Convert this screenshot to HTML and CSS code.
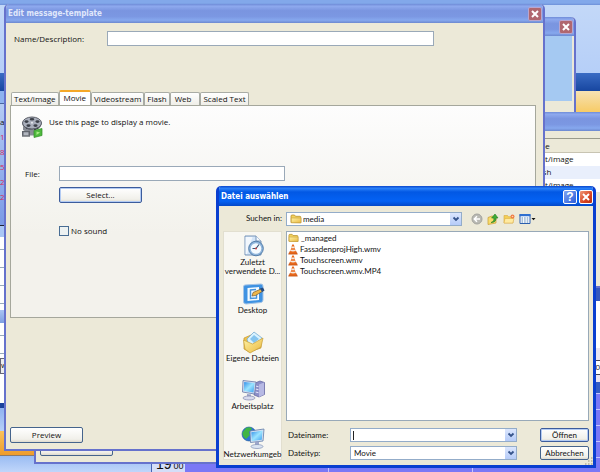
FILE: index.html
```html
<!DOCTYPE html>
<html lang="de">
<head>
<meta charset="utf-8">
<title>Edit message-template</title>
<link rel="stylesheet" href="styles.css">
</head>
<body>
<svg class="defs" aria-hidden="true">
  <defs>
    <linearGradient id="gold" x1="0" y1="0" x2="1" y2="1"><stop offset="0" stop-color="#fff3a6"/><stop offset="1" stop-color="#e9b840"/></linearGradient>
    <linearGradient id="screen" x1="0" y1="0" x2="1" y2="1"><stop offset="0" stop-color="#2f8de8"/><stop offset=".5" stop-color="#9be4ff"/><stop offset="1" stop-color="#3a9df0"/></linearGradient>
    <symbol id="folder" viewBox="0 0 12 10"><path d="M1 8.500V2Q1 1 2 1h2.500l1 1.300h4.500q.8 0 .8 1v5.400z" fill="#f3d25e" stroke="#b8912f" stroke-width=".8"/><path d="M1.300 8.800V4h9.700v4.800z" fill="url(#gold)" stroke="#c39c38" stroke-width=".6"/></symbol>
    <symbol id="cone" viewBox="0 0 10 11"><path d="M1.800 7.500h6.400l1.300 2.700h-9z" fill="#e0621a" stroke="#b94a10" stroke-width=".4"/><path d="M4.200.5h1.600L8 8.200q-3 1.500-6 0z" fill="#ea6a1c"/><path d="M3.600 2.500h2.800l.5 1.700H3.100zM2.700 5.700h4.600l.4 1.400q-2.700.9-5.400 0z" fill="#f4e8df"/></symbol>
    <symbol id="chevron" viewBox="0 0 8 6"><path d="m1.500 1.500 2.500 2.500 2.500-2.500" fill="none" stroke="#35538a" stroke-width="1.800"/></symbol>
  </defs>
</svg>
<div class="desktop">
  <div class="backdrop" aria-hidden="true">
    <div class="band cap"></div>
    <div class="band sky"></div>
    <div class="band navy"></div>
    <div class="split">
      <div class="strip">
        <div class="s-blue"></div>
        <div class="s-days"><span>a</span><span class="red">1</span><span class="red">8</span><span class="red">5</span><span class="red">22</span><span class="red">29</span></div>
        <div class="s-head"></div>
        <div class="s-rows"></div>
        <div class="s-band"></div>
        <div class="s-rows short"></div>
        <div class="s-box">w</div>
        <div class="s-white"></div>
        <div class="s-navy"></div>
        <div class="s-pale"></div>
        <div class="s-orange"></div>
        <div class="s-foot"></div>
      </div>
      <div class="hour">19 <sup>00</sup></div>
      <div class="strip calendar">
        <div class="c-amber"></div>
        <div class="c-lilac"></div>
        <div class="c-navy"></div>
        <div class="c-white"></div>
        <div class="c-pink"></div>
        <div class="c-box">0</div>
        <div class="c-pink thin"></div>
        <div class="c-blue"></div>
        <div class="c-grid"><i></i><i></i></div>
      </div>
    </div>
  </div>

  <section class="window win-behind">
    <header class="titlebar"><span></span><button class="close dim" type="button" aria-label="Close"><svg viewBox="0 0 12 12"><path d="m3 3 6 6M9 3 3 9"/></svg></button></header>
    <div class="behind-body">
      <div class="blue-area"></div>
      <button class="btn preview" type="button">Preview</button>
    </div>
  </section>

  <section class="window win-list">
    <header class="titlebar"></header>
    <table class="types">
      <thead><tr><th>Type</th></tr></thead>
      <tbody><tr><td>Text/image</td></tr><tr><td>Flash</td></tr><tr><td>Text/image</td></tr></tbody>
    </table>
  </section>

  <section class="window win-main">
    <header class="titlebar"><span>Edit message-template</span><button class="close dim" type="button" aria-label="Close"><svg viewBox="0 0 12 12"><path d="m3 3 6 6M9 3 3 9"/></svg></button></header>
    <form class="main-body">
      <div class="name-row"><label for="name">Name/Description:</label><input id="name" class="field" type="text"></div>
      <div class="tabs" role="tablist">
        <button type="button" role="tab">Text/image</button>
        <button type="button" role="tab" aria-selected="true">Movie</button>
        <button type="button" role="tab">Videostream</button>
        <button type="button" role="tab">Flash</button>
        <button type="button" role="tab" class="roomy">Web</button>
        <button type="button" role="tab">Scaled Text</button>
      </div>
      <div class="panel" role="tabpanel">
        <div class="intro">
          <svg class="reel" viewBox="0 0 22 22">
            <ellipse cx="11" cy="8" rx="9.500" ry="6.500" fill="#343840"/>
            <ellipse cx="11" cy="7" rx="9.500" ry="6" fill="#a9aebb" stroke="#5b5f69"/>
            <g fill="#3c4049"><ellipse cx="11" cy="3.300" rx="2.300" ry="1.200"/><ellipse cx="5.500" cy="5.600" rx="2" ry="1.300"/><ellipse cx="16.500" cy="5.600" rx="2" ry="1.300"/><ellipse cx="7.500" cy="9.600" rx="2.100" ry="1.300"/><ellipse cx="14.500" cy="9.600" rx="2.100" ry="1.300"/></g>
            <circle cx="11" cy="6.700" r="1" fill="#e8eaf0"/>
            <path d="M2 10v4q5 4 11 2v-3Q6 15 2 10z" fill="#868a93"/>
            <path d="M1 15h8v6H1z" fill="#60646c"/><path d="M2.500 16.300h5v3h-5z" fill="#b2b6bf"/><path d="M1.500 20.300h7" stroke="#ddd" stroke-dasharray="1 1"/>
            <path d="M9 14.500h4v5H9z" fill="#8a8e97"/>
            <path d="m13 14.500 8-2v7l-8 2z" fill="#4fb93d" stroke="#2f8c27" stroke-width=".7"/><path d="m15.500 15.500 3.500 1-3.500 2.500z" fill="#a9eb86"/>
          </svg>
          <p>Use this page to display a movie.</p>
        </div>
        <div class="file-grid">
          <label for="file">File:</label><input id="file" class="field" type="text">
          <button class="btn focus" type="button">Select...</button>
          <label class="check"><input type="checkbox">No sound</label>
        </div>
      </div>
      <button class="btn preview" type="button">Preview</button>
    </form>
  </section>

  <section class="dialog" role="dialog" aria-labelledby="dlg-title">
    <header class="dlg-title"><span id="dlg-title">Datei auswählen</span>
      <button class="close help" type="button" aria-label="Hilfe">?</button>
      <button class="close" type="button" aria-label="Schließen"><svg viewBox="0 0 12 12"><path d="m3 3 6 6M9 3 3 9"/></svg></button>
    </header>
    <form class="dlg-body">
      <label class="look-label" for="look">Suchen in:</label>
      <div class="look-row">
        <div class="combo with-icon"><svg class="lead"><use href="#folder"/></svg><select id="look"><option>media</option></select><span class="arrow"><svg><use href="#chevron"/></svg></span></div>
        <div class="tools">
          <button type="button" aria-label="Zurück"><svg viewBox="0 0 12 12"><circle cx="6" cy="6" r="5" fill="#b9b9b3" stroke="#a3a39e"/><path d="M9 6H3.500M6 3.300 3.300 6 6 8.700" fill="none" stroke="#fff" stroke-width="1.500"/></svg></button>
          <button type="button" aria-label="Übergeordneter Ordner"><svg viewBox="0 0 12 12"><path d="M1 4.500 5 3l4 1v6l-8 1.500z" fill="#f7dc6c" stroke="#c79b31" stroke-width=".7"/><path d="M4 9.500q3.500-1 2.800-4.500H4.600L8 1l3 4H9q.3 4.500-5 4.500z" fill="#3fac38" stroke="#267d22" stroke-width=".6"/></svg></button>
          <button type="button" aria-label="Neuer Ordner"><svg viewBox="0 0 12 12"><path d="M1 10V2.500h3.500l1 1.200H10V10z" fill="#f3cf56" stroke="#d8a840" stroke-width=".6"/><path d="m1 10 1-4.500h9L9.800 10z" fill="#ffeaa0" stroke="#d8a840" stroke-width=".5"/><circle cx="9.500" cy="3.500" r="2" fill="#ef7a45"/><circle cx="9.500" cy="3.500" r=".8" fill="#ffd9a8"/></svg></button>
          <button type="button" aria-label="Ansicht" class="wide"><svg viewBox="0 0 17 12"><path d="M1 1.500h10v9H1z" fill="#fff" stroke="#2c5fae"/><path d="M.5 1h11v2.200H.5z" fill="#2f6fd0"/><path d="M2.500 5h7M2.500 7h7M2.500 9h7" stroke="#5384b8" stroke-dasharray="1.600 1"/><path d="M12.500 5h4l-2 2.300z" fill="#111"/></svg></button>
        </div>
      </div>
      <nav class="places">
        <a href="#"><svg viewBox="0 0 24 24"><path d="M4 2h11l5 5v14H4z" fill="#d4e5f8" stroke="#7895b8"/><path d="M15 2v5h5" fill="#f5faff" stroke="#7895b8"/><path d="M4.500 3h7L6 20H4.500z" fill="#fff" opacity=".7"/><circle cx="15" cy="14.500" r="7.300" fill="#8fb5dc" stroke="#547da8"/><circle cx="15" cy="14.500" r="5.300" fill="#f4faff"/><path d="m15 14.500 3-4M15 14.500h-3.500" stroke="#3a5370" stroke-width="1.200"/><circle cx="15" cy="14.500" r="1" fill="#c44"/></svg>Zuletzt<br>verwendete D...</a>
        <a href="#"><svg viewBox="0 0 24 24"><path d="M4 3 20 2q2 0 2 2v14q0 2-2 2.500L5 22q-2.500 0-2.500-2.500V5Q2.500 3 4 3z" fill="#3f92e2" stroke="#a4c4e6"/><path d="M6.500 6 18 5v13L6.500 19z" fill="#f4fbff"/><path d="M15 7.500 9.500 8v8.500l6-.5v-4" fill="none" stroke="#4794de" stroke-width="1.500"/><path d="m11 14 1-3.500L20 7l2 2-7.500 4.500z" fill="#edb64a" stroke="#755c35" stroke-width=".7"/><path d="m19 6.500 3-1 1.500 3-2.500 1.500z" fill="#234b82"/></svg>Desktop</a>
        <a href="#"><svg viewBox="0 0 24 24"><path d="m3 8 7-3 3 2 7 1v10L8 22l-5-3z" fill="#efc34d" stroke="#c19633" stroke-width=".7"/><path d="m6 9 7-7 8 6-4 10-9-1z" fill="#d8f2ff" stroke="#77abd0" stroke-width=".8"/><path d="m9 9 4-4 5 4-5 4z" fill="#84c4ef"/><path d="m2.500 10 9 4 10.500-6-2 9-11 6-5-4z" fill="url(#gold)" stroke="#c79d36" stroke-width=".7"/></svg>Eigene Dateien</a>
        <a href="#"><svg viewBox="0 0 24 24"><path d="m14 5 5-2 4.500 1.500v12L18 19l-5-2z" fill="#8c8fc8" stroke="#5e629e" stroke-width=".7"/><path d="m18 6.500 5-2v12L18 19z" fill="#b7b9e4"/><path d="m14.500 8 3 .7M14.500 11l3 .7M14.500 14l3 .7" stroke="#e5e6fa"/><path d="m2 2.500 13 1.500-1.500 12L1.500 14z" fill="#d9dff1" stroke="#6479a8" stroke-width=".8"/><path d="m3.200 4 10.500 1-1.200 9.500-9.800-1.500z" fill="url(#screen)"/><path d="m6 16 4 .5v2.500H6z" fill="#9da5c9"/><ellipse cx="8" cy="20" rx="6" ry="2" fill="#d7daed" stroke="#8288ad" stroke-width=".7"/></svg>Arbeitsplatz</a>
        <a href="#"><svg viewBox="0 0 24 24"><circle cx="8" cy="8" r="7" fill="#2a75d7" stroke="#195394" stroke-width=".6"/><path d="M5 2q5-2 6 1l-3 3 1 3-4 4q-4-3-3.500-6.500z" fill="#3fb545"/><path d="m9 5 14-2-1 12-12.500 1.500z" fill="#d9e4f4" stroke="#5f7ba8" stroke-width=".8"/><path d="m10.300 6.300 11.300-1.700-.8 9.200L10.700 15z" fill="url(#screen)"/><path d="m14 16 4-.5v3.500h-4z" fill="#9da5c9"/><ellipse cx="16" cy="20.500" rx="6" ry="2" fill="#dbe4f2" stroke="#8090b5" stroke-width=".7"/></svg>Netzwerkumgeb</a>
      </nav>
      <div class="right-pane">
        <ul class="files">
          <li class="dir"><svg><use href="#folder"/></svg>_managed</li>
          <li><svg><use href="#cone"/></svg>FassadenprojHigh.wmv</li>
          <li><svg><use href="#cone"/></svg>Touchscreen.wmv</li>
          <li><svg><use href="#cone"/></svg>Touchscreen.wmv.MP4</li>
        </ul>
        <div class="fields">
          <label for="fname">Dateiname:</label>
          <div class="combo caret"><input id="fname" type="text"><span class="arrow"><svg><use href="#chevron"/></svg></span></div>
          <button class="btn focus" type="button">Öffnen</button>
          <label for="ftype">Dateityp:</label>
          <div class="combo"><select id="ftype"><option>Movie</option></select><span class="arrow"><svg><use href="#chevron"/></svg></span></div>
          <button class="btn" type="button">Abbrechen</button>
        </div>
      </div>
    </form>
    <svg class="grip" viewBox="0 0 8 8"><path d="M6 1h1.500M6 4h1.500M3 4h1.500M6 7h1.500M3 7h1.500M0 7h1.500" stroke="#b5b199" stroke-width="1.500"/></svg>
  </section>
</div>
</body>
</html>
```
FILE: styles.css
```css
* { box-sizing: border-box; }
body { margin: 0; font: 8px/12px "Open Sans", "Liberation Sans", Arial, sans-serif; color: #111; }
button, input, select { font: inherit; color: inherit; margin: 0; padding: 0; border-radius: 0; }
p, ul { margin: 0; padding: 0; list-style: none; }
svg { display: block; flex: none; }
.defs { position: absolute; width: 0; height: 0; }
.desktop { position: relative; height: 100vh; min-height: 472px; overflow: hidden; background: #b9d1f8; }

/* application behind the windows */
.backdrop { display: flex; flex-direction: column; height: 100%; }
.band { flex: none; }
.cap { height: 5px; background: linear-gradient(#82a8ea 60%, #6d90d8); }
.sky { height: 68px; background: linear-gradient(#c3d8f8, #b6cff8); }
.navy { height: 18px; background: linear-gradient(#3a6cc4, #1746a0); }
.split { display: flex; flex: 1; min-height: 0; }
.strip { display: flex; flex-direction: column; flex: none; width: 151px; overflow: hidden; }
.strip > div { flex: none; }
.s-blue { height: 13px; background: #8db2f0; border-bottom: 1px solid #4a66a0; }
.s-days { display: flex; flex-direction: column; height: 122px; padding-top: 10px; background: linear-gradient(#b4cbf4, #7b9ae6); border-bottom: 1px solid #223; line-height: 15px; }
.red { color: #d8285c; }
.s-head { height: 11px; background: #a9c6f5; }
.s-rows { height: 73px; background: repeating-linear-gradient(#fff 0 12px, #9ab 12px 13px, #fff 13px 18px); }
.s-rows.short { height: 35px; }
.s-band { height: 13px; background: linear-gradient(#a8c4f3, #7d9fe2); }
.s-box { height: 16px; background: #eee; border: 1px solid #667; }
.s-white { height: 29px; background: #fff; }
.s-navy { height: 5px; background: #1c429c; }
.s-pale { height: 23px; background: linear-gradient(#8fb2f0, #b6cff8); }
.s-orange { height: 25px; background: linear-gradient(#fbc25a, #ee9c2c); border-bottom: 1px solid #8d7a68; }
.strip .s-foot { flex: 1; background: linear-gradient(#9abcf2, #c0d6fa); }
.hour { display: flex; align-items: flex-end; width: 34px; padding-left: 4px; background: #d4def8; border-left: 1px solid #4763b5; font: 14px/16px "Liberation Sans", Arial, sans-serif; }
.hour sup { font-size: 9px; line-height: 12px; margin-left: 2px; }
.calendar { flex: 1; width: auto; text-align: right; }
.c-amber { height: 21px; background: linear-gradient(#f6e2b4, #f7cb66); }
.c-lilac { height: 176px; background: #eceafd; }
.c-navy { height: 13px; background: #3558bd; }
.c-white { height: 47px; background: #fff; }
.c-pink { height: 12px; background: #e9e4f2; }
.c-pink.thin { height: 7px; }
.c-box { height: 15px; background: #fff; border: solid #445; border-width: 1px 0; }
.c-blue { height: 11px; background: #345cc4; }
.strip .c-grid { display: flex; flex: 1; background: repeating-linear-gradient(#c4c4ff 0 1px, #7a78f6 1px 16px); }
.c-grid i { flex: 0 0 144px; border-right: 1px solid #c4c4ff; }

/* inactive windows */
.window { position: absolute; display: flex; flex-direction: column; background: #ece9d8; border: 2px solid #6672cc; border-top: 0; border-radius: 5px 5px 0 0; overflow: hidden; }
.titlebar { display: flex; align-items: center; justify-content: space-between; flex: none; height: 19px; padding: 0 1px 0 2px; background: linear-gradient(#6f8cd8, #8ea9ee 12%, #7a95e0 35%, #7b97e2 65%, #86a8ee 85%, #6c88cf); color: #e0e8fb; font: bold 8px/12px "DejaVu Sans Condensed", "DejaVu Sans", sans-serif; }
.close { display: grid; place-items: center; flex: none; width: 14px; height: 14px; border: 1px solid #fff; border-radius: 2px; background: linear-gradient(135deg, #f09a7a, #d84420 60%, #b83010); color: #fff; font: bold 12px/12px "Liberation Sans", sans-serif; }
.close svg { width: 12px; height: 12px; fill: none; stroke: #fff; stroke-width: 2; }
.close.dim { border-color: #b9a5cd; background: #b0676f; }
.close.help { background: linear-gradient(135deg, #7ea5f2, #2a5cda); }
.win-behind { left: 34px; right: 24px; top: 17px; bottom: 8px; }
.behind-body { display: flex; flex-direction: column; justify-content: space-between; flex: 1; padding: 0 2px 6px 4px; }
.blue-area { height: 65px; background: #a5c9f2; }
.win-list { left: 500px; right: -40px; top: 112px; bottom: 184px; }
.types { margin-top: 7px; border-collapse: collapse; border-top: 1px solid #9a9b8c; background: #fff; }
.types th { background: #ece9d8; font-weight: normal; border-bottom: 1px solid #c8c4b2; }
.types th, .types td { height: 14px; padding: 0 0 0 30px; text-align: left; }
.types td { height: 13px; }
.types tr:nth-child(even) td { background: #e9effc; }
.win-main { left: 4px; right: 55px; top: 4px; bottom: 21px; }
.main-body { display: flex; flex-direction: column; flex: 1; padding: 8px 7px 6px 4px; }
.name-row { display: flex; align-items: center; gap: 24px; padding: 0 102px 0 4px; }
.name-row label { flex: none; width: 69px; white-space: nowrap; }
.name-row .field { flex: 1; min-width: 0; }
.field { height: 15px; border: 1px solid #9aa9b8; background: #fff; }
.tabs { display: flex; align-items: flex-end; margin-top: 44px; padding-left: 1px; height: 15px; }
.tabs button { height: 13px; padding: 0 2px; border: 1px solid #a9aca5; border-bottom: 0; border-radius: 2px 2px 0 0; background: linear-gradient(#fff, #efeee8); white-space: nowrap; }
.tabs .roomy { padding: 0 8px 0 4px; }
.tabs [aria-selected] { height: 16px; margin-bottom: -1px; padding: 0 4px 2px; border-top: 2px solid #f5a828; background: #fff; }
.panel { height: 213px; border: 1px solid #a5a79c; background: linear-gradient(#fdfdfd, #f3f2ec 60%); padding: 10px; }
.intro { display: flex; gap: 6px; }
.reel { width: 22px; height: 22px; }
.file-grid { display: grid; grid-template-columns: 34px minmax(0, 226px); align-items: center; margin-top: 28px; padding-left: 4px; }
.file-grid .btn { grid-column: 2; width: 83px; margin-top: 6px; }
.check { grid-column: 2; display: flex; align-items: center; gap: 2px; margin-top: 22px; }
.check input { appearance: none; width: 10px; height: 10px; border: 1px solid #486d94; background: #edf2f2; }
.btn { height: 16px; border: 1px solid #45648c; border-radius: 2px; background: linear-gradient(#fff, #f1f0ea 80%, #dedace); text-align: center; }
.btn.focus { border-color: #3c5c9c; box-shadow: inset 0 0 0 1px #b3cbf3; }
.preview { width: 73px; align-self: flex-start; }
.main-body > .preview { margin-top: auto; }

/* file dialog */
.dialog { position: absolute; left: 216px; right: 4px; top: 186px; bottom: 4px; display: flex; flex-direction: column; border: 3px solid #0a3fd0; border-top: 0; border-radius: 5px 5px 0 0; background: #ece9d8; overflow: hidden; font: 8px/11px Lato, "Liberation Sans", sans-serif; }
.dlg-title { display: flex; align-items: center; gap: 2px; height: 20px; flex: none; padding: 2px 0 0 2px; background: linear-gradient(#0a46cc, #2a80f8 12%, #0258e4 30%, #0462f4 75%, #0348c8); color: #fff; font: bold 8px/12px "DejaVu Sans Condensed", "DejaVu Sans", sans-serif; }
.dlg-title span { flex: 1; }
.dlg-body { display: grid; grid-template: 14px 1fr / 59px 1fr; gap: 5px 4px; flex: 1; padding: 6px 4px 7px; }
.look-label { text-align: right; line-height: 13px; }
.look-row { display: flex; align-items: center; gap: 9px; }
.look-row .combo { flex: 1; }
.combo { position: relative; display: flex; height: 14px; border: 1px solid #93acc9; background: #fff; }
.combo select, .combo input { appearance: none; flex: 1; min-width: 0; padding-left: 3px; border: 0; background: none; outline: 0; }
.with-icon { padding-left: 13px; }
.lead { position: absolute; left: 3px; top: 1px; width: 12px; height: 10px; }
.caret::before { content: ""; position: absolute; left: 2px; top: 2px; width: 1px; height: 9px; background: #222; }
.arrow { display: grid; place-items: center; width: 11px; background: linear-gradient(#dbe6fd, #b5cbf8); pointer-events: none; }
.arrow svg { width: 8px; height: 6px; }
.tools { display: flex; gap: 4px; width: 118px; }
.tools button { width: 12px; height: 12px; border: 0; background: none; }
.tools .wide { width: 17px; }
.tools svg { width: 100%; height: 12px; }
.places { display: flex; flex-direction: column; padding-top: 2px; background: #f8f7f2; border: 1px solid #e2dfd0; }
.places a { display: flex; flex-direction: column; align-items: center; flex: none; height: 48px; color: inherit; text-decoration: none; line-height: 9px; text-align: center; white-space: nowrap; }
.places a:last-child { height: auto; }
.places svg { width: 24px; height: 24px; }
.right-pane { display: flex; flex-direction: column; gap: 7px; min-width: 0; }
.files { flex: 1; padding: 0 1px; border: 1px solid #98a9b8; background: #fff; }
.files li { display: flex; align-items: center; gap: 2px; height: 11px; }
.files svg { width: 10px; height: 11px; }
.files .dir { height: 12px; }
.files .dir svg { width: 11px; height: 10px; }
.fields { display: grid; grid-template-columns: 62px 1fr 49px; gap: 4px 0; align-items: center; padding-left: 2px; }
.fields .combo { margin-right: 23px; }
.fields .btn { height: 14px; line-height: 11px; }
.grip { position: absolute; right: 0; bottom: 0; width: 8px; height: 8px; }
```
